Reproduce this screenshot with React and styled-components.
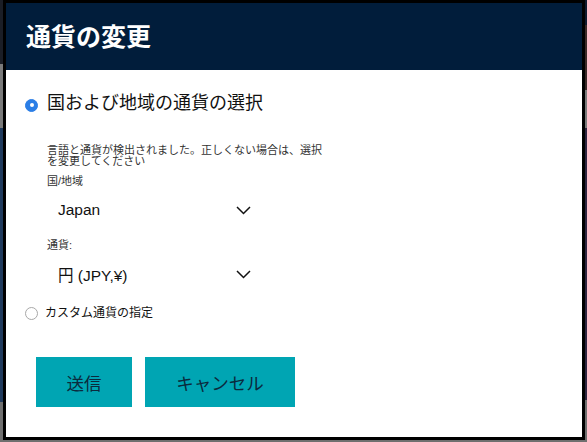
import styled, { createGlobalStyle } from 'styled-components';

const GlobalStyle = createGlobalStyle`
  html, body {
    margin: 0;
    padding: 0;
  }
  body {
    font-family: "Liberation Sans", "Noto Sans CJK JP", sans-serif;
    background: #6f6f6f;
  }
`;

const Page = styled.div`
  height: 442px;
  box-sizing: border-box;
  padding: 0 2px 2px 3px;
  background:
    linear-gradient(to bottom, #1b1e26 0 64px, #7a7a7a 64px 128px, #1f3a5c 128px 402px, #6f6f6f 402px) left top / 4px 100% no-repeat,
    linear-gradient(to bottom, #0f1a2e 0 25px, #3b2a28 25px 90px, #7a7a7a 90px 128px, #2e2640 128px 400px, #6f6f6f 400px) right top / 3px 100% no-repeat,
    #6f6f6f;
`;

const Modal = styled.section`
  height: 440px;
  box-sizing: border-box;
  border: 3px solid #000;
  background: #fff;
  display: flex;
  flex-direction: column;
`;

const Header = styled.header`
  height: 67px;
  flex-shrink: 0;
  background: #011d3b;
  display: flex;
  align-items: center;
  padding-left: 20px;
`;

const Title = styled.h1`
  margin: 0;
  color: #fff;
  font-size: 25px;
  font-weight: 700;
  line-height: 30px;
`;

const Body = styled.div`
  padding: 21px 0 0 19px;
  display: flex;
  flex-direction: column;
`;

const Option = styled.label`
  display: flex;
  align-items: center;
  gap: ${(p) => (p.$large ? '9px' : '7px')};
  font-size: ${(p) => (p.$large ? '18px' : '12px')};
  line-height: ${(p) => (p.$large ? '24px' : '16px')};
  color: #111;
  margin-top: ${(p) => p.$top || 0}px;
`;

const Radio = styled.span`
  width: 13px;
  height: 13px;
  box-sizing: border-box;
  border-radius: 50%;
  flex-shrink: 0;
  display: flex;
  align-items: center;
  justify-content: center;
  background: ${(p) => (p.$checked ? '#2b7ee6' : '#fff')};
  border: 1px solid ${(p) => (p.$checked ? '#2b7ee6' : '#a8a8a8')};
  margin-top: ${(p) => (p.$checked ? '4px' : '0')};

  &::after {
    content: '';
    width: 4px;
    height: 4px;
    border-radius: 50%;
    background: #fff;
    display: ${(p) => (p.$checked ? 'block' : 'none')};
  }
`;

const Details = styled.div`
  padding-left: 22px;
  display: flex;
  flex-direction: column;
`;

const Note = styled.p`
  margin: 30px 0 0;
  width: 285px;
  font-size: 11px;
  line-height: 11px;
  color: #333;
`;

const FieldLabel = styled.div`
  font-size: 11px;
  line-height: 14px;
  color: #333;
  margin-top: ${(p) => p.$top}px;
`;

const Select = styled.div`
  width: 214px;
  height: 30px;
  margin-top: 7px;
  padding: 0 10px 0 11px;
  box-sizing: border-box;
  display: flex;
  align-items: center;
  justify-content: space-between;
  font-size: 15.5px;
  color: #111;
`;

const Chevron = () => (
  <svg width="15" height="9" viewBox="0 0 15 9">
    <polyline points="1,1 7.5,7.5 14,1" fill="none" stroke="#111" strokeWidth="1.5" />
  </svg>
);

const Actions = styled.div`
  display: flex;
  gap: 13px;
  margin: 36px 0 0 11px;
`;

const Button = styled.button`
  width: ${(p) => p.$width}px;
  height: 50px;
  border: none;
  background: #00a5b3;
  color: #0b2a3d;
  font-family: inherit;
  font-size: 17.5px;
  padding: 0;
  cursor: pointer;
`;

const App = () => {
  return (
    <>
      <GlobalStyle />
      <Page>
        <Modal>
          <Header>
            <Title>通貨の変更</Title>
          </Header>
          <Body>
            <Option $large>
              <Radio $checked />
              国および地域の通貨の選択
            </Option>
            <Details>
              <Note>言語と通貨が検出されました。正しくない場合は、選択を変更してください</Note>
              <FieldLabel $top={7}>国/地域</FieldLabel>
              <Select>
                Japan
                <Chevron />
              </Select>
              <FieldLabel $top={13}>通貨:</FieldLabel>
              <Select>
                円 (JPY,¥)
                <Chevron />
              </Select>
            </Details>
            <Option $top={16}>
              <Radio />
              カスタム通貨の指定
            </Option>
            <Actions>
              <Button $width={96}>送信</Button>
              <Button $width={150}>キャンセル</Button>
            </Actions>
          </Body>
        </Modal>
      </Page>
    </>
  );
};

export default App;
